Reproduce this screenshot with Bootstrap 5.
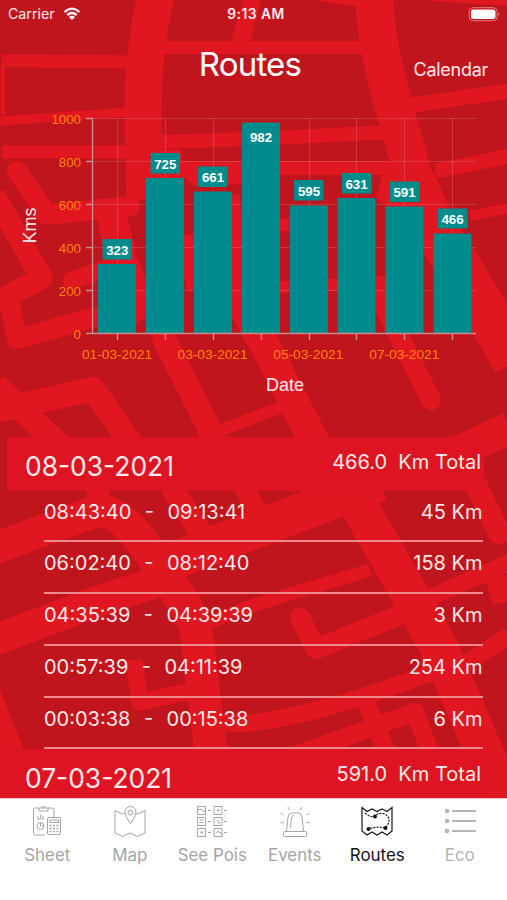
<!DOCTYPE html>
<html lang="en">
<head>
<meta charset="utf-8">
<meta name="viewport" content="width=device-width, initial-scale=1">
<title>Routes</title>
<link href="https://cdn.jsdelivr.net/npm/bootstrap@5.3.0/dist/css/bootstrap.min.css" rel="stylesheet">
<style>
body{font-family:Inter,"Liberation Sans",sans-serif;background:#fff;color:#fff}
.phone{width:507px;height:900px}
.screen{height:798px;background:#c1151e;isolation:isolate}
.streets{position:absolute;inset:0;z-index:-1}
.status{height:28px;grid-template-columns:1fr auto 1fr;padding:0 6px 0 11px;font-size:14.2px;color:#ffe9ea}
.carrier{margin-left:-3px}
.clock{font-weight:600;font-size:13.8px;letter-spacing:.5px;color:#ffe9ea}
.titlebar{height:72px;display:grid;grid-template-columns:1fr auto 1fr;padding:0 19px 0 12px}
.titlebar h1{font-size:33px;font-weight:400;line-height:40px;letter-spacing:-.8px;margin:16px 0 0}
.titlebar a{font-size:18px;letter-spacing:-.28px;color:#ffe9ea;margin-top:28px;line-height:27px}
.chart{height:337px}
.chart svg{display:block}
.chart text{font-family:"Liberation Sans",Arial,sans-serif}
.day{height:53.500px;background:#de1422;margin:0 23px 0 7px;padding:0 3px 0 18px;color:#ffe9ea}
.day.next{margin-left:3px;padding-left:22px}
.day strong{font-weight:400;font-size:26.400px;line-height:58px}
.day span{font-size:20px;line-height:50px;white-space:pre}
.trips{margin:0 24.500px 0 44px}
.trip{height:51.800px;border-bottom:2px solid #f08a8e;font-size:20px;line-height:43px;white-space:pre;color:#ffe9ea}
.trip span:first-child{word-spacing:1.100px}
.tabs{height:102px;padding:5px 6px;border-top:1px solid #f3c5c8}
.tab{color:#a5a5a5;font-size:16.900px;line-height:24px;white-space:nowrap}
.tab svg{display:block;margin-bottom:5px}
.tab.active{color:#151515}
.tab.faint{color:#b5b5b5}
</style>
<script src="https://cdn.jsdelivr.net/npm/bootstrap@5.3.0/dist/js/bootstrap.bundle.min.js"></script>
</head>
<body>
<div class="phone overflow-hidden">
<main class="screen position-relative overflow-hidden">
<svg class="streets" width="507" height="798" viewBox="0 0 507 798" fill="none" stroke="#e01721" stroke-linejoin="round" aria-hidden="true">
<path stroke-width="37" d="M156 -5Q143 50 143 110L145 200"/>
<path stroke-width="24" d="M148 285L166 343L195 400L217 445"/>
<path stroke-width="30" d="M108 200L122 260L146 318"/>
<path stroke-width="13" d="M160 47.500H370"/>
<path stroke-width="18" d="M253 -3L239 48"/>
<path stroke-width="38" d="M374 -5Q376 45 395 110L420 200"/>
<path stroke-width="44" d="M414 180Q430 225 466 278L515 362"/>
<path stroke-width="13" d="M2 60.500L128 62"/><path stroke-width="4" d="M3 60V115"/>
<path stroke-width="9" d="M0 121L128 112"/>
<path stroke-width="13" d="M2 152H130"/>
<path stroke-width="14" d="M160 142L254 139L390 132"/>
<path stroke-width="14" d="M160 168H410"/>
<path stroke="none" fill="#e01721" d="M160 150H182V178H160ZM180 174H245V184L194 186ZM385 165H420V215H398L376 198Z"/>
<path stroke-width="15" d="M436 171L510 156M405 106L510 91"/>
<path stroke-width="10" d="M315 -5L360 2M430 -4L510 1M470 216L510 208"/>
<path stroke-width="20" stroke-linecap="round" d="M17 171L47 215L130 206"/>
<path stroke-width="22" d="M-6 195L42 278L0 300"/>
<path stroke-width="20" stroke-linecap="round" d="M9 300L17 339L95 317"/>
<path stroke-width="18" stroke-linecap="round" d="M72 280L110 268"/>
<path stroke-width="24" d="M-5 411L93 389L132 445M-5 385L65 450"/>
<path stroke-width="30" d="M225 275L262 340L293 400L316 445"/>
<path stroke-width="12" d="M200 438L290 404M225 236L300 222M270 288L390 282"/>
<path stroke-width="20" stroke-linecap="round" d="M378 295L431 400"/>
<path stroke-width="18" d="M186 235L196 290M230 195L246 300"/>
<path stroke-width="32" d="M440 460L510 428"/>
<path stroke-width="22" stroke-linecap="round" d="M474 480L499 533"/>
<path stroke-width="38" d="M350 490L410 595L440 650L505 800"/>
<path stroke-width="38" d="M170 562L254 530L380 482"/>
<path stroke-width="22" d="M98 480V515M170 485L212 550"/>
<path stroke-width="20" d="M240 480L262 520"/>
<path stroke-width="32" d="M-5 548L110 506"/>
<path stroke-width="33" d="M100 510Q130 515 160 570Q196 612 198 645L212 760"/>
<path stroke-width="31" d="M-5 640L85 606L180 574"/>
<path stroke-width="13" d="M195 628L254 605L370 570"/>
<path stroke-width="17" d="M420 602L510 562M455 671L510 635"/>
<path stroke-width="20" stroke-linecap="round" d="M300 618L316 649L405 613"/>
<path stroke-width="17" d="M210 723H250Q320 715 430 673"/>
<path stroke-width="17" d="M134 660L140 702L205 688"/>
<path stroke-width="18" d="M365 700L388 755M290 757L415 712L433 760"/>
<path stroke="none" fill="#e01721" d="M0 690L24 750V798H0Z"/>
<path stroke="none" fill="#e01721" d="M485 580L507 575V602L493 604Z"/>
</svg>

<header class="status d-grid align-items-center">
<div class="carrier d-flex align-items-center gap-2"><span>Carrier</span>
<svg width="18" height="14" viewBox="0 0 18 14" fill="none" stroke="#fff" stroke-width="2.300" aria-label="Wi-Fi"><path d="M1.500 5Q9 -1.700 16.500 5M4.300 8Q9 4 13.700 8"/><path fill="#fff" stroke="none" d="M6 10Q9 7.600 12 10L9 13Z"/></svg></div>
<span class="clock">9:13 AM</span>
<svg class="ms-auto" width="33" height="15" viewBox="0 0 33 15" aria-label="Battery"><rect x="1.200" y=".7" width="28" height="13" rx="4" fill="none" stroke="#ea7a80"/><rect x="3" y="2.500" width="24.500" height="9.500" rx="2.500" fill="#fff"/><path d="M30.500 5Q32.500 7 30.500 9.500Z" fill="#ea7a80"/></svg>
</header>
<div class="titlebar"><span></span><h1>Routes</h1><a class="text-decoration-none text-end" href="#">Calendar</a></div>

<section class="chart">
<svg width="507" height="337" viewBox="0 100 507 337" aria-label="Kms by date">
<g stroke="#d9a0a0" stroke-opacity=".25"><path d="M93 118.500H476M93 161.500H476M93 204.500H476M93 247.500H476M93 290.500H476M117.500 118V333M165.500 118V333M213.500 118V333M309.500 118V333M356.500 118V333M404.500 118V333M452.500 118V333"/></g>
<g fill="#008c8c">
<path d="M98 264H136V333H98ZM146 178H184V333H146ZM194 191.500H232V333H194ZM242 122.500H280V333H242ZM290 205.500H328V333H290ZM337.500 198H375.500V333H337.500ZM385.500 206.500H423.500V333H385.500ZM433.500 233.500H471.500V333H433.500Z"/>
<path d="M102.500 239H132V259.500H102.500ZM150.500 153H180V173.500H150.500ZM198 166.500H227.500V187H198ZM294 180H323.500V200.500H294ZM342 173H371.500V193.500H342ZM390 181.500H419.500V202H390ZM438 208.500H467.500V228.500H438Z"/></g>
<g stroke="#c98d91" stroke-width="1.400" fill="none"><path d="M92.500 118V334M86 118.500H93M86 161.500H93M86 204.500H93M86 247.500H93M86 290.500H93M86 333.500H476M117.500 333V340M165.500 333V340M213.500 333V340M261.500 333V340M309.500 333V340M356.500 333V340M404.500 333V340M452.500 333V340" /></g>
<g fill="#fff" font-size="13.300" font-weight="700" text-anchor="middle"><text x="117.300" y="254.500">323</text><text x="165.300" y="168.500">725</text><text x="213" y="182">661</text><text x="261" y="142">982</text><text x="309" y="196">595</text><text x="356.500" y="188.500">631</text><text x="404.500" y="197">591</text><text x="452.500" y="224">466</text></g>
<g fill="#ff8206" font-size="13.300" text-anchor="end"><text x="81" y="123.500">1000</text><text x="81" y="166.500">800</text><text x="81" y="209.500">600</text><text x="81" y="252.500">400</text><text x="81" y="295.500">200</text><text x="81" y="338.500">0</text></g>
<g fill="#ff8206" font-size="13.700" text-anchor="middle"><text x="117" y="358.500">01-03-2021</text><text x="212.600" y="358.500">03-03-2021</text><text x="308.300" y="358.500">05-03-2021</text><text x="404.300" y="358.500">07-03-2021</text></g>
<g fill="#ffe9ea" font-size="18" text-anchor="middle"><text x="285" y="391">Date</text><text transform="translate(35.500 225.500) rotate(-90)">Kms</text></g>
</svg>
</section>

<section>
<div class="day d-flex justify-content-between"><strong>08-03-2021</strong><span>466.0  Km Total</span></div>
<div class="trips">
<div class="trip d-flex justify-content-between"><span>08:43:40  -  09:13:41</span><span>45 Km</span></div>
<div class="trip d-flex justify-content-between"><span>06:02:40  -  08:12:40</span><span>158 Km</span></div>
<div class="trip d-flex justify-content-between"><span>04:35:39  -  04:39:39</span><span>3 Km</span></div>
<div class="trip d-flex justify-content-between"><span>00:57:39  -  04:11:39</span><span>254 Km</span></div>
<div class="trip d-flex justify-content-between"><span>00:03:38  -  00:15:38</span><span>6 Km</span></div>
</div>
<div class="day next d-flex justify-content-between"><strong>07-03-2021</strong><span>591.0  Km Total</span></div>
</section>
</main>

<nav class="tabs row row-cols-6 g-0">
<div class="tab col d-flex flex-column align-items-center"><svg width="34" height="34" viewBox="0 0 34 34" fill="none" stroke="currentColor"><path d="M15 31H5.500Q3.500 31 3.500 29V5.500Q3.500 4 5.500 4H22Q24 4 24 6V14M9 4V7H18V4M11.500 4Q11.500 2.500 13.500 2.500T15.500 4M7 15H14M8 14V12M10.500 14V10.500M13 14V12"/><circle cx="10.500" cy="22" r="3.500"/><path d="M10.500 18.500V22H14"/><rect x="17.500" y="13.500" width="13" height="17" rx="1.500"/><path d="M19.500 16H28.500V18.500H19.500Z"/><path stroke-dasharray="2 1.500" stroke-width="1.500" d="M19.500 21.500H29M19.500 24.500H29M19.500 27.500H29"/></svg>Sheet</div>
<div class="tab col d-flex flex-column align-items-center"><svg width="34" height="34" viewBox="0 0 34 34" fill="none" stroke="currentColor"><path d="M12.500 9L9.500 10L2 6.500V29L9.500 32.500L17 29L24.500 32.500L32 29V6.500L24.500 10L22.500 9"/><path d="M17.500 19.500Q12 12 12 8A5.500 5.500 0 0 1 23 8Q23 12 17.500 19.500Z"/><circle cx="17.500" cy="8.500" r="2.500"/></svg>Map</div>
<div class="tab col d-flex flex-column align-items-center"><svg width="34" height="34" viewBox="0 0 34 34" fill="none" stroke="currentColor"><path d="M2.500 2.500H10.500V10.500H2.500ZM19 2.500H27V10.500H19ZM2.500 13.500H10.500V21.500H2.500ZM19 13.500H27V21.500H19ZM2.500 24.500H10.500V32.500H2.500ZM19 24.500H27V32.500H19ZM13 6.500H16M29 6.500H32M13 17.500H16M29 17.500H32M13 28.500H16M29 28.500H32M3 6L6 5L8 7H10M4.500 16H8.500M4.500 18.500H8.500M21 29L23 27L25 29H27M22 16L24 18V20"/><path stroke-width="2" d="M22 6.500H24.500M5.500 28.500H8"/></svg>See Pois</div>
<div class="tab col d-flex flex-column align-items-center"><svg width="34" height="34" viewBox="0 0 34 34" fill="none" stroke="currentColor"><path d="M8.500 27.500L10 13Q10.500 9 14 9H20Q23.500 9 24 13L25.500 27.500M12.500 24L13.500 14Q14 11.500 16 11.500"/><rect x="5.500" y="27.500" width="23" height="5" rx="1"/><path d="M11.500 6L10 3M22.500 6L24 3M5.500 11L2.500 9M28.500 11L31.500 9M6 18L2.500 19M28 18L31.500 19"/></svg>Events</div>
<div class="tab active col d-flex flex-column align-items-center"><svg width="34" height="34" viewBox="0 0 34 34" fill="none" stroke="currentColor" stroke-width="1.200"><path d="M2 3.500L7 7.500L12 5L17 7.500L22 5L27 7.500L32 3.500V27L27 31L22 28L17 31L12 28L7 31L2 27Z"/><path stroke-dasharray="2 1.200" d="M5 9Q9 13 14 12.500Q19 8 25 10Q31 14 28 20L25 24Q17 22 8 25"/><g fill="currentColor" stroke="none"><circle cx="15" cy="12.500" r="2"/><circle cx="8.500" cy="25" r="2"/><circle cx="25.500" cy="24" r="2"/></g></svg>Routes</div>
<div class="tab faint col d-flex flex-column align-items-center"><svg width="34" height="34" viewBox="0 0 34 34" fill="none" stroke="currentColor" stroke-width="2.200" stroke-linecap="round"><path d="M10 7H32M10 17H32M10 27H32"/><g fill="currentColor" stroke="none"><circle cx="4" cy="7" r="2.300"/><circle cx="4" cy="17" r="2.300"/><circle cx="4" cy="27" r="2.300"/></g></svg>Eco</div>
</nav>
</div>
</body>
</html>
